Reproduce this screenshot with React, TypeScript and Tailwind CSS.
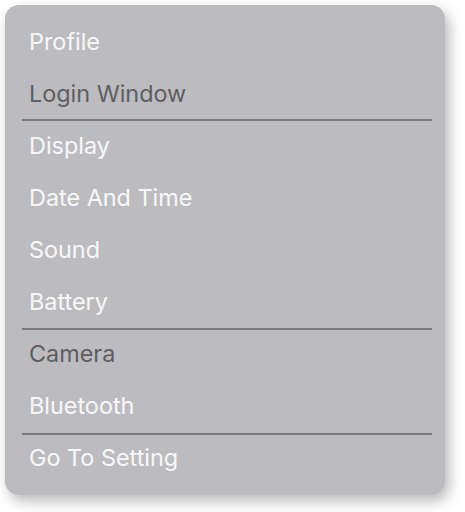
type MenuItem = {
  label: string;
  muted?: boolean;
  divider?: string;
};

// divider holds the class that nudges that separator into place
const items: MenuItem[] = [
  { label: "Profile" },
  { label: "Login Window", muted: true, divider: "translate-y-0" },
  { label: "Display" },
  { label: "Date And Time" },
  { label: "Sound" },
  { label: "Battery", divider: "translate-y-[1px]" },
  { label: "Camera", muted: true },
  { label: "Bluetooth", divider: "translate-y-[2px]" },
  { label: "Go To Setting" },
];

export default function App() {
  return (
    <div className="min-h-screen bg-white p-[5px] font-['Inter',_'Liberation_Sans',_sans-serif]">
      <div className="flex w-[440px] flex-col rounded-[14px] bg-[#bcbcc0] pb-[11px] pl-[17px] pr-[13px] pt-[11px] shadow-[4px_6px_14px_rgba(0,0,0,0.28)]">
        {items.map((item) => (
          <div key={item.label} className="flex flex-col">
            <div
              className={`flex h-[52px] items-center pl-[7px] text-[23.4px] leading-none ${
                item.muted ? "text-[#5e5e61]" : "text-[#f7f7f8]"
              }`}
            >
              {item.label}
            </div>
            {item.divider && (
              <div className={`-my-px h-[2px] bg-[#7b7b7e] ${item.divider}`} />
            )}
          </div>
        ))}
      </div>
    </div>
  );
}
